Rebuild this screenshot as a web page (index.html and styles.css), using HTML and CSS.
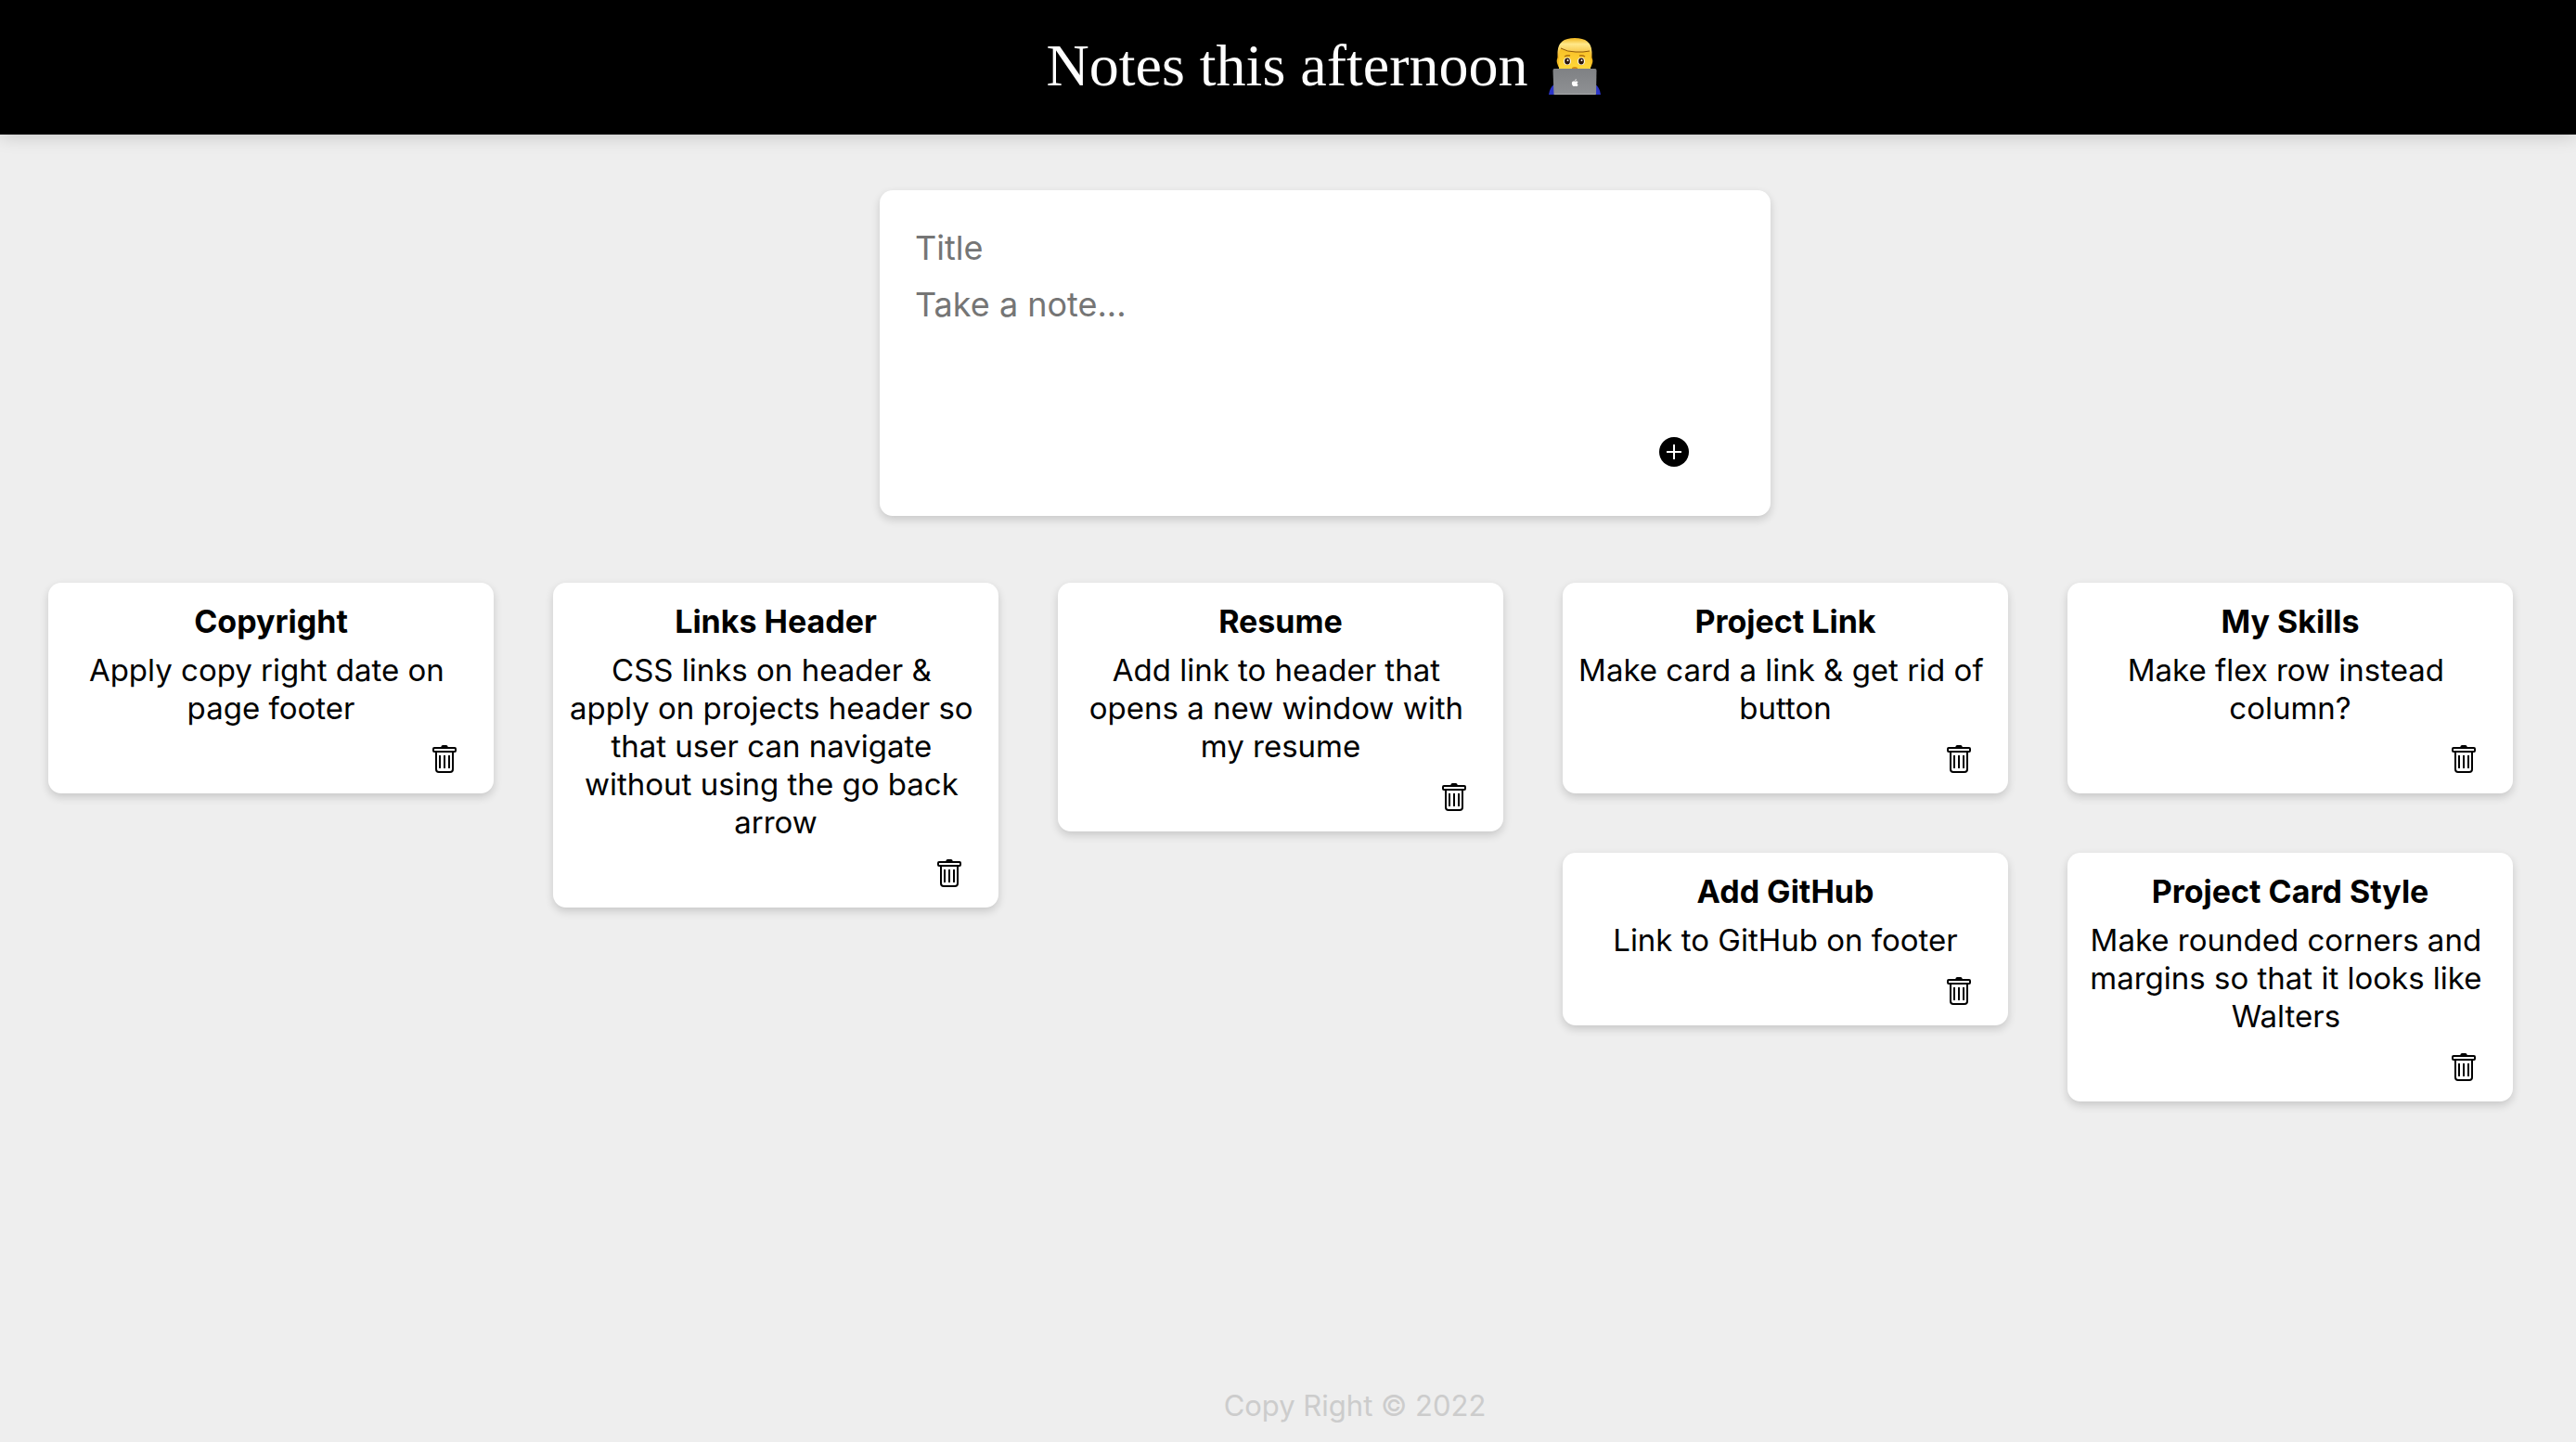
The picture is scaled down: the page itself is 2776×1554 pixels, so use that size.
FILE: index.html
```html
<!DOCTYPE html>
<html lang="en">
<head>
<meta charset="utf-8">
<meta name="viewport" content="width=device-width, initial-scale=1">
<title>Notes</title>
<link rel="stylesheet" href="styles.css">
</head>
<body>
<svg class="sprite" aria-hidden="true">
  <symbol id="trash" viewBox="0 0 26 30">
    <path d="M9 2.4 9.800 .8Q10.300 0 11.200 0h3.600q.9 0 1.400.8l.8 1.600z"/>
    <g fill="none" stroke="currentColor" stroke-width="2">
      <rect x="1" y="3" width="24" height="4" rx="1"/>
      <path d="M4 7v19q0 3 3 3h12q3 0 3-3V7M8 11v14M13 11v14M18 11v14"/>
    </g>
  </symbol>
</svg>

<header class="header">
  <h1 class="header-title">Notes this afternoon
    <svg class="coder" viewBox="0 0 56 61" role="img" aria-label="Man at a laptop">
      <defs>
        <linearGradient id="hair" x1="0" y1="0" x2="0" y2="1"><stop offset="0" stop-color="#f0b51c"/><stop offset=".3" stop-color="#ffe88a"/><stop offset="1" stop-color="#f0ae18"/></linearGradient>
        <linearGradient id="skin" x1="0" y1="0" x2="0" y2="1"><stop offset="0" stop-color="#f9bf25"/><stop offset="1" stop-color="#ffd83a"/></linearGradient>
        <linearGradient id="lid" x1="0" y1="0" x2="0" y2="1"><stop offset="0" stop-color="#7f8184"/><stop offset="1" stop-color="#8f9194"/></linearGradient>
      </defs>
      <path fill="#2a34c8" d="M0 61q1-8 6-11h44q5 3 6 11z"/>
      <path fill="#f6bb22" d="M10 21q-2 2-1 6t3 6h32q2-2 3-6t-1-6z"/>
      <path fill="url(#skin)" d="M11 10h34v23H11z"/>
      <path fill="url(#hair)" d="M9.500 22v-7Q10 0 28 0t18.500 15v7h-1.500l-.5-8q-7 1.500-15.500 1Q20 15 13 11l-1.500 3-.5 8z"/>
      <path fill="none" stroke="#8f5a0a" stroke-width="1" d="M13 11q7 4 16 4 8.500.5 15-1"/>
      <path fill="none" stroke="#b06f0a" stroke-width="1.500" d="M17 20q3-2 6-1M33 19q3-1 6 1"/>
      <ellipse cx="20" cy="25" rx="3.900" ry="3.900" fill="#fff"/><ellipse cx="35" cy="25" rx="3.900" ry="3.900" fill="#fff"/>
      <ellipse cx="20" cy="25" rx="2.900" ry="3.400" fill="#2d1608"/><ellipse cx="35" cy="25" rx="2.900" ry="3.400" fill="#2d1608"/>
      <circle cx="20.500" cy="24" r="1" fill="#fff"/><circle cx="35.500" cy="24" r="1" fill="#fff"/>
      <path fill="#d48a10" d="M25 32q3-2 6 0v1h-6z"/>
      <path fill="url(#lid)" d="M6 33h44q1.500 0 1.500 2L51 61H5.500L4.500 35q0-2 1.500-2z"/>
      <path fill="#a9abad" d="M6 60h44v1H6z"/>
      <path fill="#fff" d="M28.200 46.200q0-1.600 1.600-2.200 0 1.700-1.600 2.200zM30.600 49q0-1.200 1-1.800-.9-1-2.200-.7-1 .3-1.600.1c-1.800-.7-3.200.5-2.900 2.600.2 1.500 1.200 2.800 2 2.800.5 0 .8-.3 1.500-.3s1 .4 1.500.3c.8-.1 1.400-1 1.700-1.600q-1-.3-1-1.400z"/>
    </svg>
  </h1>
</header>

<main class="main">
  <form class="note-form">
    <input class="field" type="text" name="title" placeholder="Title" aria-label="Title">
    <textarea class="field field-note" name="content" rows="3" placeholder="Take a note..." aria-label="Take a note"></textarea>
    <button class="icon-button add" type="button" aria-label="Add note">
      <svg width="32" height="32" viewBox="0 0 32 32"><circle cx="16" cy="16" r="16"/><path stroke="#fff" stroke-width="2" d="M16 8v16M8 16h16"/></svg>
    </button>
  </form>
</main>

<section class="board" aria-label="Notes">
  <div class="column">
    <article class="note">
      <h2 class="note-title">Copyright</h2>
      <p class="note-text">Apply copy right date on page footer</p>
      <button class="icon-button delete" type="button" aria-label="Delete note"><svg width="26" height="30"><use href="#trash"/></svg></button>
    </article>
  </div>
  <div class="column">
    <article class="note">
      <h2 class="note-title">Links Header</h2>
      <p class="note-text">CSS links on header &amp; 
apply on projects header so that user can navigate without using the go back arrow</p>
      <button class="icon-button delete" type="button" aria-label="Delete note"><svg width="26" height="30"><use href="#trash"/></svg></button>
    </article>
  </div>
  <div class="column">
    <article class="note">
      <h2 class="note-title">Resume</h2>
      <p class="note-text">Add link to header that opens a new window with my resume</p>
      <button class="icon-button delete" type="button" aria-label="Delete note"><svg width="26" height="30"><use href="#trash"/></svg></button>
    </article>
  </div>
  <div class="column">
    <article class="note">
      <h2 class="note-title">Project Link</h2>
      <p class="note-text">Make card a link &amp; get rid of button</p>
      <button class="icon-button delete" type="button" aria-label="Delete note"><svg width="26" height="30"><use href="#trash"/></svg></button>
    </article>
    <article class="note">
      <h2 class="note-title">Add GitHub</h2>
      <p class="note-text">Link to GitHub on footer</p>
      <button class="icon-button delete" type="button" aria-label="Delete note"><svg width="26" height="30"><use href="#trash"/></svg></button>
    </article>
  </div>
  <div class="column">
    <article class="note">
      <h2 class="note-title">My Skills</h2>
      <p class="note-text">Make flex row instead column?</p>
      <button class="icon-button delete" type="button" aria-label="Delete note"><svg width="26" height="30"><use href="#trash"/></svg></button>
    </article>
    <article class="note">
      <h2 class="note-title">Project Card Style</h2>
      <p class="note-text">Make rounded corners and margins so that it looks like Walters </p>
      <button class="icon-button delete" type="button" aria-label="Delete note"><svg width="26" height="30"><use href="#trash"/></svg></button>
    </article>
  </div>
</section>

<footer class="footer">Copy Right © 2022</footer>
</body>
</html>
```
FILE: styles.css
```css
* {
  box-sizing: border-box;
}

body {
  margin: 0;
  min-height: 100vh;
  display: flex;
  flex-direction: column;
  background: #eee;
  color: #000;
  font-family: Inter, "Liberation Sans", sans-serif;
  font-size: 33px;
  line-height: 41px;
}

.sprite {
  position: absolute;
  width: 0;
  height: 0;
}

.header {
  padding: 34px 0 37px 76px;
  background: #000;
  box-shadow: 0 0 20px rgba(0, 0, 0, 0.2);
}

.header-title {
  display: flex;
  align-items: center;
  justify-content: center;
  gap: 22px;
  margin: 0;
  color: #fff;
  font: 400 64px/74px "Liberation Serif", serif;
}

.coder {
  width: 56px;
  height: 61px;
}

.main {
  padding: 60px 0 72px 80px;
}

.note-form,
.note {
  display: flex;
  flex-direction: column;
  border-radius: 14px;
  background: #fff;
  box-shadow: 0 4px 10px rgba(0, 0, 0, 0.16);
}

.note-form {
  width: 960px;
  max-width: 100%;
  margin: 0 auto;
  padding: 40px 38px 53px;
}

.field {
  width: 100%;
  padding: 0;
  border: 0;
  outline: 0;
  background: none;
  font: 400 36px/44px Inter, "Liberation Sans", sans-serif;
}

.field::placeholder {
  color: #757575;
}

.field-note {
  display: block;
  margin-top: 17px;
  resize: none;
}

.icon-button {
  display: flex;
  align-self: flex-end;
  padding: 0;
  border: 0;
  background: none;
  color: #000;
  cursor: pointer;
}

.add {
  margin: 33px 50px 0 0;
}

.board {
  display: grid;
  grid-template-columns: repeat(5, minmax(0, 1fr));
  gap: 64px;
  padding: 0 68px 64px 52px;
}

.column {
  display: flex;
  flex-direction: column;
  gap: 64px;
}

.note {
  padding: 21px 16px 22px;
  text-align: center;
}

.note-title {
  margin: 0 0 12px;
  font-size: 34px;
  font-weight: 700;
}

.note-text {
  margin: 0;
  white-space: break-spaces;
}

.delete {
  margin: 19px 24px 0 0;
}

.footer {
  margin-top: auto;
  padding: 0 0 20px 144px;
  color: #ccc;
  font-size: 31px;
  line-height: 38px;
  text-align: center;
}
```
